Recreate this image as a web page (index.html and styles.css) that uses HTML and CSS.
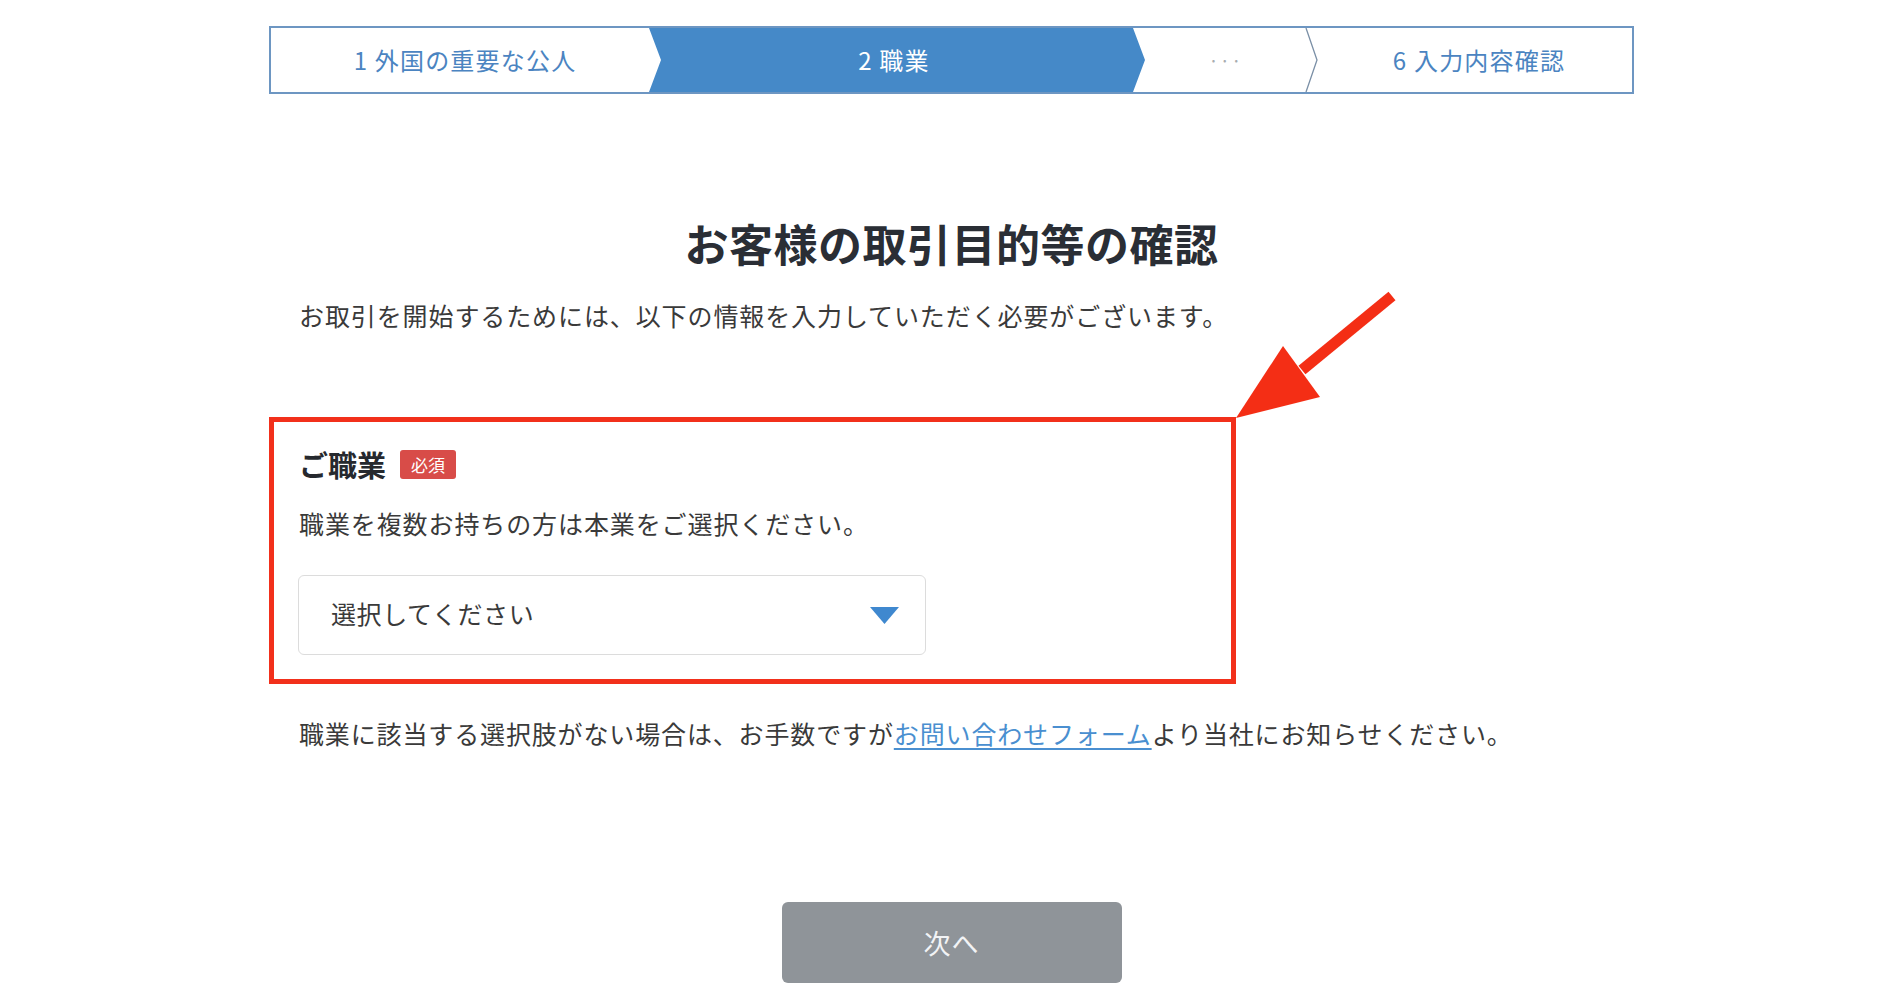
FILE: index.html
```html
<!DOCTYPE html>
<html lang="ja">
<head>
<meta charset="utf-8">
<title>お客様の取引目的等の確認</title>
<link rel="stylesheet" href="styles.css">
</head>
<body>
<div class="page">
  <div class="stepper">
    <div class="step step-done"><span>1 外国の重要な公人</span></div>
    <div class="step step-active"><span>2 職業</span></div>
    <div class="step step-more">
      <span>···</span>
      <svg class="step-sep" width="13" height="64" viewBox="0 0 13 64"><polyline points="1,0 12,32 1,64" fill="none" stroke="#7a8fa6" stroke-width="1.3"/></svg>
    </div>
    <div class="step step-last"><span>6 入力内容確認</span></div>
  </div>

  <h1 class="title">お客様の取引目的等の確認</h1>
  <p class="intro">お取引を開始するためには、以下の情報を入力していただく必要がございます。</p>

  <div class="highlight">
    <div class="field-label">
      <span class="label-text">ご職業</span>
      <span class="badge">必須</span>
    </div>
    <p class="field-desc">職業を複数お持ちの方は本業をご選択ください。</p>
    <div class="select">
      <span class="select-text">選択してください</span>
      <svg class="select-caret" width="29" height="17" viewBox="0 0 29 17"><polygon points="0,0 29,0 14.5,17" fill="#3f88cf"/></svg>
    </div>
  </div>

  <p class="note">職業に該当する選択肢がない場合は、お手数ですが<a class="link" href="#">お問い合わせフォーム</a>より当社にお知らせください。</p>

  <div class="actions">
    <button class="btn-next" type="button">次へ</button>
  </div>

  <svg class="callout-arrow" width="170" height="135" viewBox="0 0 170 135">
    <line x1="162" y1="6" x2="72" y2="80" stroke="#f42e15" stroke-width="11"/>
    <polygon points="6,128 53,56 90,107" fill="#f42e15"/>
  </svg>
</div>
</body>
</html>
```

FILE: styles.css
```css
* {
  box-sizing: border-box;
}

html, body {
  margin: 0;
  padding: 0;
  background: #ffffff;
}

body {
  font-family: "Noto Sans CJK JP", "Noto Sans", sans-serif;
  color: #333333;
}

.page {
  position: relative;
  width: 1365px;
  margin-left: calc(50% - 681px);
  padding-top: 26px;
}

/* Stepper */
.stepper {
  display: flex;
  height: 68px;
  border: 2px solid #6d96c2;
  background: #ffffff;
}

.step {
  display: flex;
  align-items: center;
  justify-content: center;
  font-size: 24px;
  line-height: 1;
  color: #4b84c1;
  letter-spacing: 1.2px;
}

.step-done {
  width: 378px;
  padding-left: 10px;
}

.step-active {
  width: 496px;
  background: #4589c8;
  color: #ffffff;
  padding-right: 6px;
  clip-path: polygon(0 0, 484px 0, 496px 50%, 484px 100%, 0 100%, 12px 50%);
}

.step-more {
  position: relative;
  width: 185px;
  margin-left: -12px;
  color: #a8acb0;
  font-size: 18px;
}

.step-sep {
  position: absolute;
  right: 0;
  top: 0;
}

.step-last {
  flex: 1;
  margin-left: -12px;
  padding-left: 20px;
}

/* Heading */
.title {
  margin: 119px 0 0;
  text-align: center;
  font-size: 44px;
  line-height: 60px;
  font-weight: 700;
  letter-spacing: 0.5px;
  color: #2a2e35;
}

.intro {
  margin: 24px 0 0;
  padding-left: 30px;
  font-size: 25px;
  line-height: 36px;
  letter-spacing: 0.9px;
  color: #3a3a3a;
}

/* Highlighted field */
.highlight {
  width: 967px;
  margin-top: 84px;
  border: 5px solid #f2301b;
  padding: 22px 25px 24px;
}

.field-label {
  display: flex;
  align-items: center;
  height: 40px;
}

.label-text {
  font-size: 29px;
  font-weight: 700;
  color: #26292e;
  line-height: 40px;
}

.badge {
  margin-left: 14px;
  width: 56px;
  height: 29px;
  border-radius: 3px;
  background: #d84c48;
  color: #ffffff;
  font-size: 17px;
  line-height: 29px;
  text-align: center;
}

.field-desc {
  margin: 21px 0 0;
  font-size: 25px;
  line-height: 36px;
  letter-spacing: 0.9px;
  color: #3a3a3a;
}

.select {
  display: flex;
  align-items: center;
  justify-content: space-between;
  width: 628px;
  height: 80px;
  margin-top: 34px;
  margin-left: -1px;
  padding: 0 26px 4px 32px;
  border: 1px solid #dcdcdc;
  border-radius: 6px;
  background: #ffffff;
}

.select-text {
  font-size: 25px;
  color: #3a3a3a;
  letter-spacing: 0.6px;
}

.select-caret {
  margin-top: 4px;
}

/* Note */
.note {
  margin: 31px 0 0;
  padding-left: 30px;
  font-size: 25px;
  line-height: 36px;
  letter-spacing: 0.86px;
  color: #3a3a3a;
}

.link {
  color: #4a8fd0;
  text-decoration: underline;
  text-underline-offset: 4px;
}

/* Actions */
.actions {
  display: flex;
  justify-content: center;
  margin-top: 151px;
}

.btn-next {
  width: 340px;
  height: 81px;
  border: none;
  border-radius: 6px;
  background: #8f9499;
  color: #f2f3f5;
  font-family: "Noto Sans CJK JP", "Noto Sans", sans-serif;
  font-size: 27px;
  letter-spacing: 1px;
}

/* Annotation arrow overlay */
.callout-arrow {
  position: absolute;
  left: 961px;
  top: 290px;
}
```
